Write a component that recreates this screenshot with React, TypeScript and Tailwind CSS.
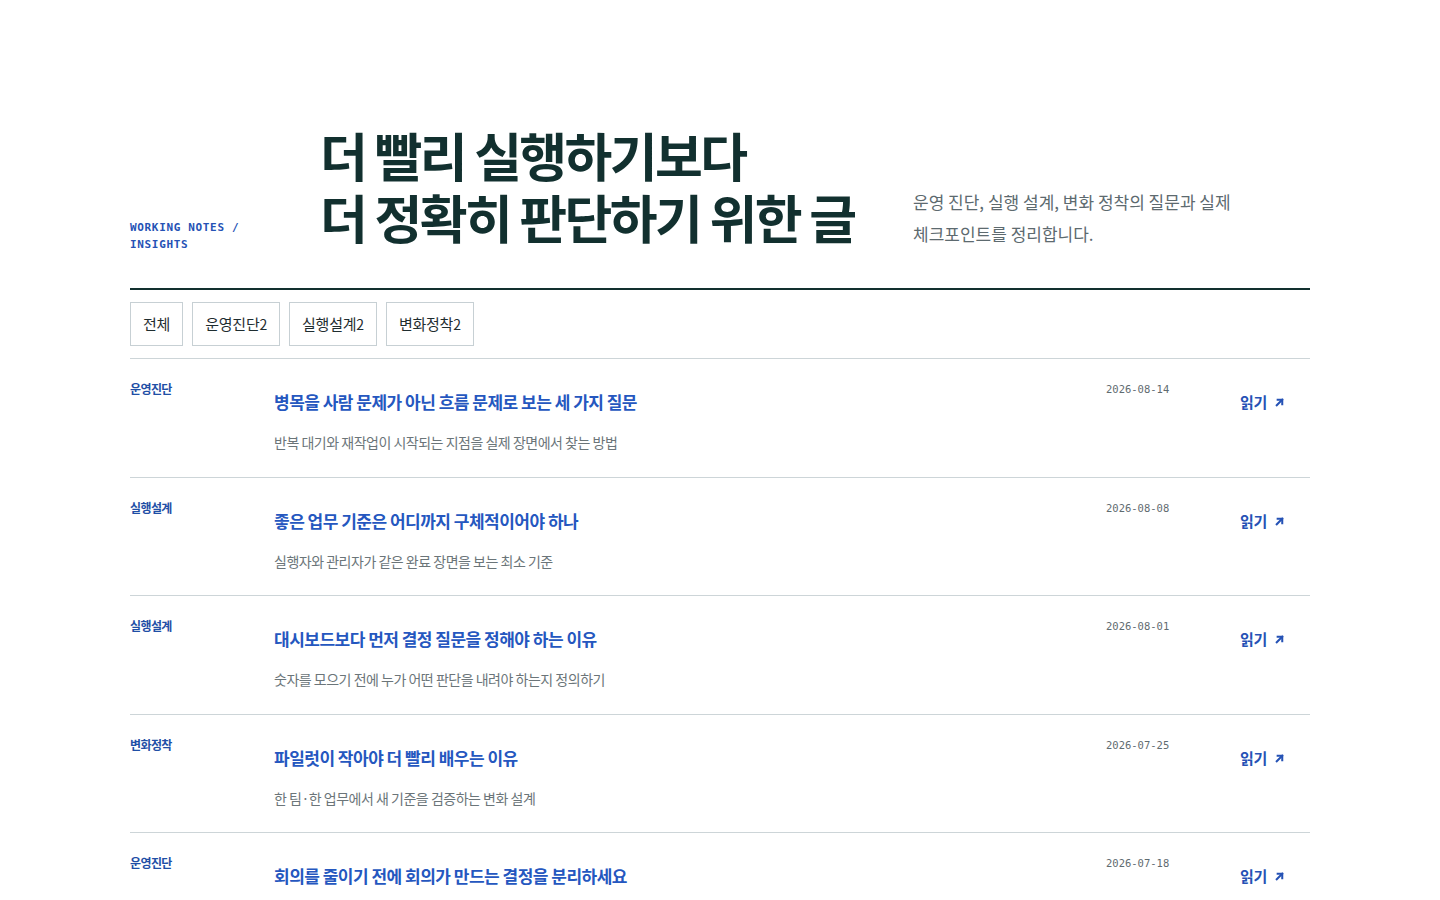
import React from "react";

const posts = [
  { cat: "운영진단", title: "병목을 사람 문제가 아닌 흐름 문제로 보는 세 가지 질문", desc: "반복 대기와 재작업이 시작되는 지점을 실제 장면에서 찾는 방법", date: "2026-08-14" },
  { cat: "실행설계", title: "좋은 업무 기준은 어디까지 구체적이어야 하나", desc: "실행자와 관리자가 같은 완료 장면을 보는 최소 기준", date: "2026-08-08" },
  { cat: "실행설계", title: "대시보드보다 먼저 결정 질문을 정해야 하는 이유", desc: "숫자를 모으기 전에 누가 어떤 판단을 내려야 하는지 정의하기", date: "2026-08-01" },
  { cat: "변화정착", title: "파일럿이 작아야 더 빨리 배우는 이유", desc: "한 팀·한 업무에서 새 기준을 검증하는 변화 설계", date: "2026-07-25" },
  { cat: "운영진단", title: "회의를 줄이기 전에 회의가 만드는 결정을 분리하세요", desc: "회의 시간을 줄이기보다 결정 단위를 먼저 나누는 방법", date: "2026-07-18" },
];

const filters = [
  { label: "전체", count: "" },
  { label: "운영진단", count: "2" },
  { label: "실행설계", count: "2" },
  { label: "변화정착", count: "2" },
];

function Arrow() {
  return (
    <svg width="11" height="11" viewBox="0 0 12 12" fill="none" className="inline-block ml-[7px] mb-[2px]">
      <path d="M3 9L9 3" stroke="currentColor" strokeWidth="2.2" strokeLinecap="square" />
      <path d="M4 3H9V8" stroke="currentColor" strokeWidth="2.2" strokeLinecap="square" />
    </svg>
  );
}

export default function App() {
  const sans = { fontFamily: '"Noto Sans CJK KR", "Noto Sans", sans-serif' };
  const mono = { fontFamily: '"DejaVu Sans Mono", monospace' };
  return (
    <div className="min-h-screen bg-white" style={sans}>
      <div className="mx-auto w-[1180px] pt-[124px]">
        <header className="flex items-end pb-[40px] border-b-2 border-[#12302f]">
          <div className="w-[190px] -mb-[5px]">
            <p
              className="max-w-[140px] text-[11px] font-bold leading-[17px] tracking-[0.06em] text-[#2552b5]"
              style={mono}
            >
              WORKING NOTES / INSIGHTS
            </p>
          </div>
          <h1 className="flex-1 text-[52px] font-bold leading-[62px] tracking-[-0.05em] text-[#12302f]">
            더 빨리 실행하기보다
            <br />더 정확히 판단하기 위한 글
          </h1>
          <div className="w-[397px] -mb-[2px]">
            <p className="max-w-[340px] break-keep text-[17px] leading-[32px] text-[#5d6a6f]">
              운영 진단, 실행 설계, 변화 정착의 질문과 실제 체크포인트를 정리합니다.
            </p>
          </div>
        </header>

        <div className="flex gap-[9px] py-[12px] border-b border-[#cdd5d8]">
          {filters.map((f) => (
            <button
              key={f.label}
              className="h-[44px] px-3 border border-[#c7d0d4] bg-white text-[15px] text-[#1f2d30] tracking-[-0.015em]"
            >
              {f.label}
              {f.count && <span className="text-[14px]">{f.count}</span>}
            </button>
          ))}
        </div>

        <div>
          {posts.map((p, i) => (
            <div
              key={i}
              className="grid grid-cols-[144px_1fr_134px_70px] pt-[22px] pb-[24.5px] border-b border-[#cdd5d8]"
            >
              <div className="text-[12px] font-bold leading-[16px] text-[#1f4fa6] tracking-[-0.05em]">{p.cat}</div>
              <div className="pt-[8px]">
                <div className="text-[17px] font-bold leading-[26px] text-[#2557bf] tracking-[-0.03em]">{p.title}</div>
                <div className="mt-[17px] text-[14px] leading-[20px] text-[#6b7579] tracking-[-0.035em]">{p.desc}</div>
              </div>
              <div className="text-[10.5px] leading-[16px] text-[#5f6b70]" style={mono}>
                {p.date}
              </div>
              <div className="pt-[8px]">
                <a className="text-[15px] font-bold leading-[26px] text-[#2552b5] whitespace-nowrap tracking-[-0.02em]">
                  읽기
                  <Arrow />
                </a>
              </div>
            </div>
          ))}
        </div>
      </div>
    </div>
  );
}
